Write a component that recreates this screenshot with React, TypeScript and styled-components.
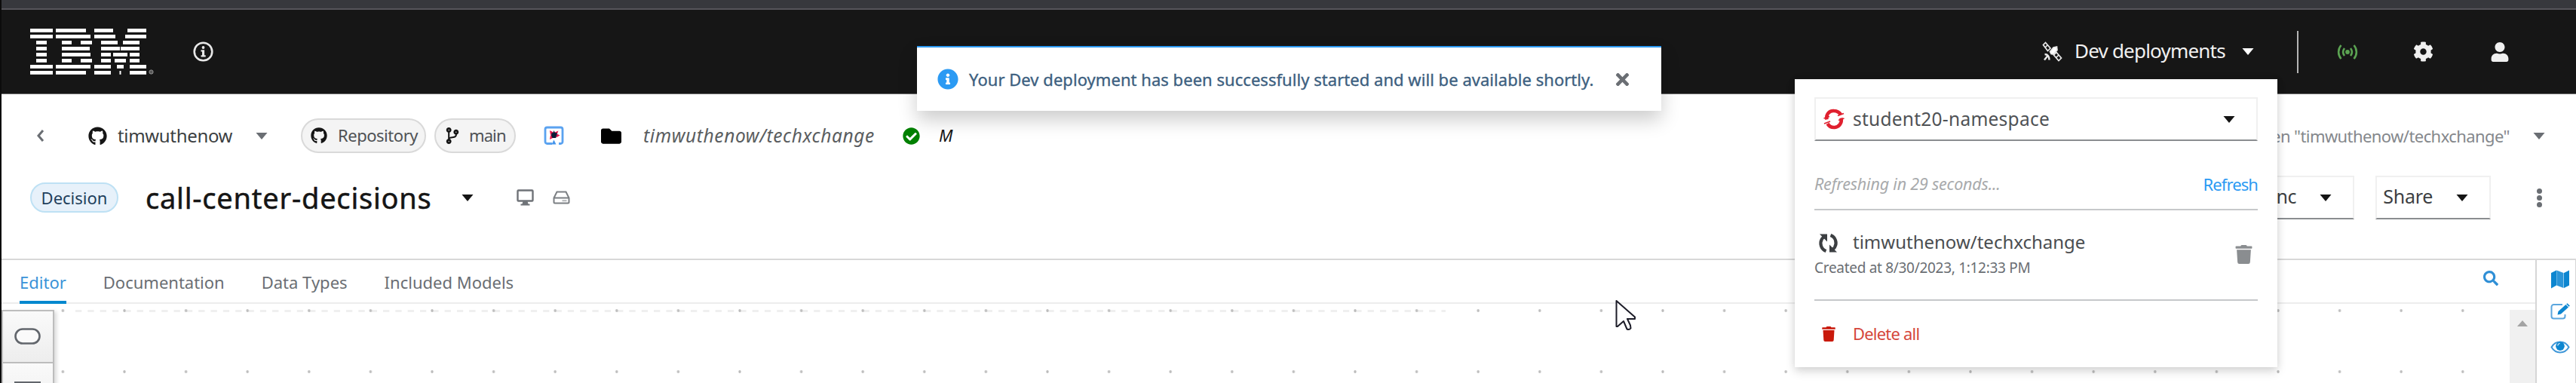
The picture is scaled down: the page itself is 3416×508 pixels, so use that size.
import React from "react";
import styled, { createGlobalStyle, css } from "styled-components";
import {
  FaCheckCircle,
  FaCodeBranch,
  FaCog,
  FaFolder,
  FaGithub,
  FaInfoCircle,
  FaSearch,
  FaTimes,
  FaTrash,
  FaUser,
} from "react-icons/fa";

const GlobalStyle = createGlobalStyle`
  *, *::before, *::after { box-sizing: border-box; }
  body { margin: 0; background: #fff; }
  svg { display: block; flex: none; }
`;

const Page = styled.div`
  position: relative;
  display: flex;
  flex-direction: column;
  width: 3416px;
  height: 508px;
  overflow: hidden;
  border-left: 2px solid #0c0c0c;
  background: #fff;
  color: #151515;
  font-family: "Noto Sans", "Open Sans", sans-serif;
`;

const WindowEdge = styled.div`
  flex: none;
  height: 13px;
  background: #37383d;
  border-bottom: 2px solid #56555b;
`;

const Masthead = styled.header`
  flex: none;
  display: flex;
  align-items: center;
  height: 112px;
  padding: 0 88px 0 38px;
  background: #161616;
  border-bottom: 1px solid #6a6a6a;
  color: #f0f0f0;
`;

const MastheadTools = styled.div`
  display: flex;
  align-items: center;
  margin-left: auto;
`;

const Divider = styled.span`
  width: 2px;
  height: 56px;
  margin: 0 51px 0 57px;
  background: #b4b4b4;
`;

const ToolGap = styled.span<{ $w: number }>`
  flex: none;
  width: ${(p) => p.$w}px;
`;

const Label = styled.span<{
  $size: number;
  $width?: number;
  $spacing?: number;
  $color?: string;
  $italic?: boolean;
  $lift?: number;
  $weight?: number;
}>`
  flex: none;
  white-space: nowrap;
  line-height: 1.5;
  font-size: ${(p) => p.$size}px;
  letter-spacing: ${(p) => p.$spacing ?? 0}px;
  font-weight: ${(p) => p.$weight ?? 400};
  padding-bottom: ${(p) => p.$lift ?? 0}px;
  ${(p) => p.$width && css`width: ${p.$width}px;`}
  ${(p) => p.$color && css`color: ${p.$color};`}
  ${(p) => p.$italic && css`font-style: italic;`}
`;

const ToastMessage = styled(Label)`
  -webkit-text-stroke: 0.35px currentColor;
`;

const PageHeader = styled.section`
  flex: none;
  display: flex;
  flex-direction: column;
  height: 220px;
  padding-top: 26px;
  border-bottom: 2px solid #d8d8d8;
`;

const ContextRow = styled.div`
  display: flex;
  align-items: center;
  height: 58px;
  padding: 0 41px 0 46px;
  color: #3c3f42;
`;

const TitleRow = styled.div`
  display: flex;
  align-items: center;
  height: 58px;
  margin-top: 24px;
  padding: 0 45px 0 38px;
`;

const Trailing = styled.div`
  display: flex;
  align-items: center;
  margin-left: auto;
`;

const Chip = styled.span<{ $width: number; $gap: number }>`
  flex: none;
  display: flex;
  align-items: center;
  gap: ${(p) => p.$gap}px;
  width: ${(p) => p.$width}px;
  height: 46px;
  margin-right: 11px;
  padding-left: 11px;
  border: 2px solid #d9d9d9;
  border-radius: 23px;
  background: #f4f4f4;
  color: #151515;
`;

const KindBadge = styled.span`
  flex: none;
  display: flex;
  align-items: center;
  justify-content: center;
  width: 117px;
  height: 40px;
  border: 2px solid #bee1f4;
  border-radius: 20px;
  background: #e7f1fa;
  color: #1f3f5c;
`;

const Title = styled.h1`
  flex: none;
  width: 379px;
  margin: 0 40px 0 36px;
  padding-top: 2px;
  font-size: 38px;
  font-weight: 400;
  line-height: 1.4;
  letter-spacing: 0.78px;
  white-space: nowrap;
  -webkit-text-stroke: 0.5px #151515;
`;

const MenuButton = styled.button<{ $width: number }>`
  flex: none;
  display: flex;
  align-items: center;
  justify-content: flex-end;
  gap: 31px;
  width: ${(p) => p.$width}px;
  height: 58px;
  padding: 0 28px 0 0;
  border: 2px solid #f0f0f0;
  border-bottom-color: #8a8d90;
  background: transparent;
  font-family: inherit;
  color: #3c3f42;
`;

const Kebab = styled.span`
  display: flex;
  flex-direction: column;
  gap: 2px;
  margin-left: 61px;
`;

const KebabDot = styled.i`
  width: 7px;
  height: 7px;
  border-radius: 50%;
  background: #6a6e73;
`;

const Workbench = styled.main`
  flex: 1;
  display: flex;
  min-height: 0;
`;

const EditorPane = styled.div`
  flex: 1;
  display: flex;
  flex-direction: column;
  min-width: 0;
`;

const TabBar = styled.nav`
  flex: none;
  display: flex;
  align-items: flex-start;
  gap: 49px;
  height: 58px;
  padding: 0 49px 0 24px;
  border-bottom: 2px solid #ededed;
`;

const Tab = styled.a<{ $active?: boolean }>`
  flex: none;
  height: 58px;
  padding-top: 13px;
  border-bottom: 4px solid ${(p) => (p.$active ? "#0088ce" : "transparent")};
  color: ${(p) => (p.$active ? "#3a93d8" : "#6a6e73")};
  font-size: 22px;
  line-height: 33px;
  white-space: nowrap;
`;

const SearchSlot = styled.span`
  margin: 14px 0 0 auto;
  color: #2f8fd6;
`;

const DiagramArea = styled.div`
  flex: 1;
  position: relative;
  display: flex;
  justify-content: space-between;
  padding-top: 8px;
`;

const GridDots = styled.svg`
  position: absolute;
  inset: 0;
  width: 100%;
  height: 100%;
`;

const Palette = styled.div`
  position: relative;
  flex: none;
  width: 70px;
  height: 110px;
  border: 2px solid #bdbdbd;
  box-shadow: 3px 2px 5px rgba(0, 0, 0, 0.15);
`;

const PaletteItem = styled.div`
  display: flex;
  justify-content: center;
  height: 69px;
  padding-top: 22px;
  border-bottom: 2px solid #bdbdbd;
  background: linear-gradient(#fafafa, #ededed);
`;

const ScrollTrack = styled.div`
  position: relative;
  width: 34px;
  padding: 14px 0 0 10px;
  background: #f0f0f0;
`;

const SideDock = styled.aside`
  flex: none;
  display: flex;
  flex-direction: column;
  align-items: flex-start;
  width: 54px;
  padding: 13px 0 0 18px;
  border-left: 2px solid #d6d6d6;
  border-right: 1px solid #d6d6d6;
  color: #0d86d0;
`;

const DockIcon = styled.span<{ $top: number }>`
  margin-top: ${(p) => p.$top}px;
`;

const Toast = styled.div`
  position: absolute;
  top: 61px;
  left: 1214px;
  display: flex;
  align-items: center;
  width: 987px;
  height: 86px;
  padding: 0 40px 0 27px;
  border-top: 2px solid #2b9af3;
  background: #fff;
  box-shadow: 0 12px 24px rgba(3, 3, 3, 0.2);
  color: #6a6e73;
`;

const DeploymentsMenu = styled.div`
  position: absolute;
  top: 105px;
  left: 2378px;
  display: flex;
  flex-direction: column;
  width: 640px;
  height: 382px;
  padding: 24px 26px 0 26px;
  background: #fff;
  box-shadow: 0 6px 12px rgba(3, 3, 3, 0.14), 0 0 10px rgba(3, 3, 3, 0.08);
`;

const NamespaceSelect = styled.div`
  display: flex;
  align-items: center;
  height: 58px;
  padding: 0 28px 0 10px;
  border: 2px solid #f0f0f0;
  border-bottom-color: #8a8d90;
  color: #4f5255;
`;

const RefreshRow = styled.div`
  display: flex;
  align-items: center;
  justify-content: space-between;
  height: 67px;
  margin-top: 25px;
  border-bottom: 2px solid #c6c8ca;
`;

const DeploymentRow = styled.div`
  display: flex;
  align-items: center;
  justify-content: space-between;
  height: 120px;
  padding: 0 6px 2px 0;
  border-bottom: 2px solid #c6c8ca;
  color: #8a8d90;
`;

const DeploymentInfo = styled.div`
  display: flex;
  flex-direction: column;
`;

const DeploymentName = styled.div`
  display: flex;
  align-items: center;
  gap: 19px;
  height: 37px;
  padding-left: 5px;
  color: #3c3f42;
`;

const DeleteRow = styled.div`
  display: flex;
  align-items: center;
  gap: 22px;
  height: 87px;
  padding-left: 9px;
  color: #c9190b;
`;

const Pointer = styled.svg`
  position: absolute;
  top: 397px;
  left: 2140px;
`;

const Caret = ({ color = "#151515", w = 16 }: { color?: string; w?: number }) => (
  <svg width={w} height={9} viewBox="0 0 16 9">
    <path d="M0.5 0h15L8 9z" fill={color} />
  </svg>
);

const BackChevron = () => (
  <svg width={11} height={18} viewBox="0 0 11 18">
    <path d="M9 2L3 9l6 7" fill="none" stroke="#6a6e73" strokeWidth={3} />
  </svg>
);

const LOGO_BARS: number[][][] = [
  [[0, 30], [34, 74], [85, 110], [129, 154]],
  [[0, 30], [34, 80], [85, 113], [126, 154]],
  [[8, 22], [42, 55], [67, 82], [94, 116], [123, 145]],
  [[8, 22], [42, 79], [94, 119], [120, 145]],
  [[8, 22], [42, 80], [94, 107], [110, 129], [132, 145]],
  [[8, 22], [42, 55], [67, 82], [94, 107], [112, 127], [132, 145]],
  [[0, 30], [34, 80], [85, 107], [115, 124], [132, 154]],
  [[0, 30], [34, 74], [85, 107], [118.5, 120.5], [132, 154]],
];

const BrandLogo = () => (
  <svg width={166} height={62} viewBox="0 0 166 62">
    {LOGO_BARS.map((row, r) =>
      row.map(([a, b]) => (
        <rect key={`${r}-${a}`} x={a} y={r * 8} width={b - a} height={4.8} fill="#fff" />
      )),
    )}
    <circle cx={160.5} cy={57.5} r={2.6} fill="#555" stroke="#999" />
  </svg>
);

const InfoOutline = () => (
  <svg width={27} height={27} viewBox="0 0 27 27" fill="#e8e8e8">
    <circle cx={13.5} cy={13.5} r={11.8} fill="none" stroke="#e8e8e8" strokeWidth={2.6} />
    <circle cx={13.5} cy={8} r={1.9} />
    <path d="M10.5 11.3h4.6v7h1.6v2.2h-6.2v-2.2h1.5v-4.8h-1.5z" />
  </svg>
);

const Satellite = () => (
  <svg width={27} height={27} viewBox="0 0 27 27" fill="none" stroke="#e8e8e8" strokeWidth={1.7}>
    <path d="M1.500 4.500L4.500 1.500l6.500 7.500-3.500 3.500zM4 8l3.500-3.500" />
    <path d="M15.500 18l3.500-3.500 6.500 7.500-3.500 3.500zM18.500 21.500l3.500-3.500" />
    <path d="M10.500 13.500l4.500-5.500 4.500-1 .5 4.500-5 5.500-3-.5z" fill="#fff" />
    <path d="M3.500 17c4 0 6 2.500 6 7.500M3 24.500l4-5" strokeWidth={2.400} />
  </svg>
);

const Antenna = () => (
  <svg width={28} height={20} viewBox="0 0 28 20" fill="none" stroke="#5ba352" strokeWidth={2.6}>
    <path d="M5.500 1C1 6 1 14 5.500 19M10 5c-2.300 3-2.300 7 0 10M18 5c2.300 3 2.300 7 0 10M22.500 1C27 6 27 14 22.500 19" />
    <circle cx={14} cy={10} r={2.900} fill="#5ba352" stroke="none" />
  </svg>
);

const KogitoMark = () => (
  <svg width={28} height={26} viewBox="0 0 28 26">
    <path
      d="M11 23.500H4.500a2.500 2.500 0 0 1-2.500-2.500V4.500A2.500 2.500 0 0 1 4.500 2h18A2.500 2.500 0 0 1 25 4.500V21a2.500 2.500 0 0 1-2.500 2.500H20"
      fill="none"
      stroke="#5aa2f0"
      strokeWidth={2.800}
    />
    <path d="M10.500 24.500l3-6 3 6z" fill="#4695eb" />
    <path d="M8 6l5 2.500-4 4zM8 18l1-6 5 3z" fill="#e6174c" />
    <path d="M19.500 6.500l-5 2 3 3zM21.500 12.500l-5 3V10z" fill="#e6174c" />
    <path d="M13.500 6l1.500 3 3 .5-1 3.500-1 3h-4.500l-1.500-3.500.5-3 2-.5z" fill="#0b1c38" />
  </svg>
);

const Monitor = () => (
  <svg width={23} height={22} viewBox="0 0 23 22">
    <rect x={1.500} y={1.500} width={20} height={14} rx={1} fill="none" stroke="#6f7378" strokeWidth={2.400} />
    <path d="M8.500 16h6l1 3.500h2V21.500h-12v-2h2z" fill="#6f7378" />
  </svg>
);

const Drive = () => (
  <svg width={23} height={18} viewBox="0 0 23 18" fill="none" stroke="#7b7f83" strokeWidth={2}>
    <path d="M1.500 9.500L5.500 1.500h12l4 8v5.500a1.500 1.500 0 0 1-1.500 1.500H3a1.500 1.500 0 0 1-1.500-1.500zM1.500 9.500h20" />
    <path d="M12.500 13.200h6" stroke="#b5b7ba" />
  </svg>
);

const ClusterMark = () => (
  <svg width={28} height={28} viewBox="0 0 28 28" fill="none" stroke="#e0202f" strokeWidth={4.600}>
    <path d="M4.500 14.500C3 6.500 9 2.500 14 3c4.500.3 7.500 2.500 9 5" />
    <path d="M23.500 12.500c1.500 7-3 12-8.500 12.500-4.500.3-7.500-1.500-9.500-5" />
    <path d="M0.500 13l7.500-2.500M1 20l8-3M19 9.500l8-3M20 15.500l7.500-2.500" strokeWidth={1.800} />
  </svg>
);

const SyncArrows = () => (
  <svg width={27} height={27} viewBox="0 0 27 27" fill="none" stroke="#3c3f42" strokeWidth={4.200}>
    <path d="M10.500 24C4 21.500 1.500 14 5 8l3-3.500M16.500 3c6.500 2.500 9 10 5.500 16l-3 3.500" />
    <path d="M2 1.500h10v10zM25 25.500h-10v-10z" fill="#3c3f42" stroke="none" />
  </svg>
);

const MapFold = () => (
  <svg width={26} height={25} viewBox="0 0 26 25">
    <path d="M1 4l7-3.500v20L1 24.500zM18 4l7-3.500v20L18 24z" fill="#0d86d0" />
    <path d="M8.300 0.500L17.500 4v20l-9.200-3.500z" fill="#2b95d8" />
  </svg>
);

const EditSquare = () => (
  <svg width={26} height={22} viewBox="0 0 26 22">
    <path
      d="M16 2H4.500A3 3 0 0 0 1.500 5v12.500a3 3 0 0 0 3 3h12a3 3 0 0 0 3-3V15"
      fill="none"
      stroke="#5ba6de"
      strokeWidth={2}
    />
    <path d="M9.500 15.500l1-4.500L20.500 2l3.500 3.500-10 9z" fill="#0d86d0" />
    <path d="M21.200 1.300l1.300-1.100 3.300 3.300-1.200 1.200z" fill="#0d86d0" />
  </svg>
);

const Eye = () => (
  <svg width={26} height={17} viewBox="0 0 26 17">
    <path d="M1.500 8.500C7-.8 19-.8 24.500 8.500 19 17.800 7 17.800 1.500 8.500z" fill="#fff" stroke="#3f97d8" strokeWidth={2} />
    <circle cx={13} cy={7.200} r={5.800} fill="#0d86d0" />
    <path d="M9.800 6.500a3.200 3.200 0 0 1 3-3" fill="none" stroke="#cfe6f6" strokeWidth={1.200} />
  </svg>
);

export default function App() {
  return (
    <Page>
      <GlobalStyle />
      <WindowEdge />
      <Masthead>
        <BrandLogo />
        <ToolGap $w={50} />
        <InfoOutline />
        <MastheadTools>
          <Satellite />
          <ToolGap $w={16} />
          <Label $size={26} $width={200} $spacing={-0.8} $lift={2}>Dev deployments</Label>
          <ToolGap $w={22} />
          <Caret color="#fff" />
          <Divider />
          <Antenna />
          <ToolGap $w={73} />
          <FaCog size={27} />
          <ToolGap $w={75} />
          <FaUser size={26} />
        </MastheadTools>
      </Masthead>

      <PageHeader>
        <ContextRow>
          <BackChevron />
          <ToolGap $w={58} />
          <FaGithub size={25} color="#151515" />
          <ToolGap $w={14} />
          <Label $size={24} $width={153} $spacing={-0.33}>timwuthenow</Label>
          <ToolGap $w={30} />
          <Caret color="#6a6e73" />
          <ToolGap $w={44} />
          <Chip $width={166} $gap={14}>
            <FaGithub size={22} />
            <Label $size={22} $spacing={-0.47} $lift={2} $color="#4f5255">Repository</Label>
          </Chip>
          <Chip $width={108} $gap={11}>
            <FaCodeBranch size={22} />
            <Label $size={22} $spacing={-0.9} $lift={2} $color="#4f5255">main</Label>
          </Chip>
          <ToolGap $w={26} />
          <KogitoMark />
          <ToolGap $w={48} />
          <FaFolder size={27} color="#000" />
          <ToolGap $w={29} />
          <Label $size={24.500} $width={309} $spacing={0.6} $italic $color="#5a5d60">timwuthenow/techxchange</Label>
          <ToolGap $w={35} />
          <FaCheckCircle size={23} color="#008000" />
          <ToolGap $w={25} />
          <Label $size={22} $italic $lift={2} $color="#151515">M</Label>
          <Trailing>
            <Label $size={22} $spacing={-0.58} $color="#85888c">Open "timwuthenow/techxchange"</Label>
            <ToolGap $w={31} />
            <Caret color="#6a6e73" />
          </Trailing>
        </ContextRow>
        <TitleRow>
          <KindBadge>
            <Label $size={22}>Decision</Label>
          </KindBadge>
          <Title>call-center-decisions</Title>
          <Caret />
          <ToolGap $w={57} />
          <Monitor />
          <ToolGap $w={25} />
          <Drive />
          <Trailing>
            <MenuButton $width={152}>
              <Label $size={25} $spacing={-0.5} $lift={3}>Sync</Label>
              <Caret />
            </MenuButton>
            <ToolGap $w={28} />
            <MenuButton $width={153}>
              <Label $size={25} $spacing={-0.3} $lift={3}>Share</Label>
              <Caret />
            </MenuButton>
            <Kebab>
              <KebabDot />
              <KebabDot />
              <KebabDot />
            </Kebab>
          </Trailing>
        </TitleRow>
      </PageHeader>

      <Workbench>
        <EditorPane>
          <TabBar>
            <Tab $active>Editor</Tab>
            <Tab>Documentation</Tab>
            <Tab>Data Types</Tab>
            <Tab>Included Models</Tab>
            <SearchSlot>
              <FaSearch size={20} />
            </SearchSlot>
          </TabBar>
          <DiagramArea>
            <GridDots>
              <defs>
                <pattern id="dots" x={40.600} y={49} width={81.600} height={81} patternUnits="userSpaceOnUse">
                  <ellipse cx={40.800} cy={41} rx={1.700} ry={2} fill="#bcbcbc" />
                </pattern>
              </defs>
              <line x1={98} x2={1915} y1={9.500} y2={9.500} stroke="#efefef" strokeWidth={3} strokeDasharray="8.300 8.020" />
              <rect x={70} width={3256} height={105} fill="url(#dots)" />
            </GridDots>
            <Palette>
              <PaletteItem>
                <svg width={36} height={23} viewBox="0 0 36 23">
                  <rect x={1.500} y={1.500} width={32} height={19} rx={9.500} fill="#fafafa" stroke="#62666c" strokeWidth={2.600} />
                </svg>
              </PaletteItem>
              <PaletteItem>
                <svg width={36} height={23} viewBox="0 0 36 23">
                  <rect x={1.500} y={3.500} width={32} height={18} fill="#fafafa" stroke="#62666c" strokeWidth={3} />
                </svg>
              </PaletteItem>
            </Palette>
            <ScrollTrack>
              <svg width={14} height={8} viewBox="0 0 14 8">
                <path d="M0 8L7 0l7 8z" fill="#a3a3a3" />
              </svg>
            </ScrollTrack>
          </DiagramArea>
        </EditorPane>
        <SideDock>
          <MapFold />
          <DockIcon $top={19}>
            <EditSquare />
          </DockIcon>
          <DockIcon $top={28}>
            <Eye />
          </DockIcon>
        </SideDock>
      </Workbench>

      <Toast>
        <FaInfoCircle size={28} color="#2b9af3" />
        <ToolGap $w={14} />
        <ToastMessage $size={22} $width={829} $spacing={0.04} $color="#3d5f80">
          Your Dev deployment has been successfully started and will be available shortly.
        </ToastMessage>
        <ToolGap $w={25} />
        <FaTimes size={25} />
      </Toast>

      <DeploymentsMenu>
        <NamespaceSelect>
          <ClusterMark />
          <ToolGap $w={11} />
          <Label $size={24.500} $spacing={0.25}>student20-namespace</Label>
          <Trailing>
            <Caret />
          </Trailing>
        </NamespaceSelect>
        <RefreshRow>
          <Label $size={21.500} $spacing={-0.2} $italic $color="#a8aaac">Refreshing in 29 seconds...</Label>
          <Label $size={22} $spacing={-0.9} $color="#2b9af3">Refresh</Label>
        </RefreshRow>
        <DeploymentRow>
          <DeploymentInfo>
            <DeploymentName>
              <SyncArrows />
              <Label $size={24} $lift={3} $color="#4a4d50">timwuthenow/techxchange</Label>
            </DeploymentName>
            <Label $size={19} $spacing={-0.3} $color="#6a6e73">Created at 8/30/2023, 1:12:33 PM</Label>
          </DeploymentInfo>
          <FaTrash size={25} />
        </DeploymentRow>
        <DeleteRow>
          <FaTrash size={20} />
          <Label $size={22} $spacing={-0.8} $color="#d5463b">Delete all</Label>
        </DeleteRow>
      </DeploymentsMenu>

      <Pointer width={30} height={42} viewBox="0 0 30 42">
        <path
          d="M1.500 2v34h1.500l8-7 4.500 10.500q3 1.500 5-1l-.5-4-4-8.500h10v-2.500z"
          fill="#fff"
          stroke="#1c1c28"
          strokeWidth={2}
          strokeLinejoin="round"
        />
      </Pointer>
    </Page>
  );
}
